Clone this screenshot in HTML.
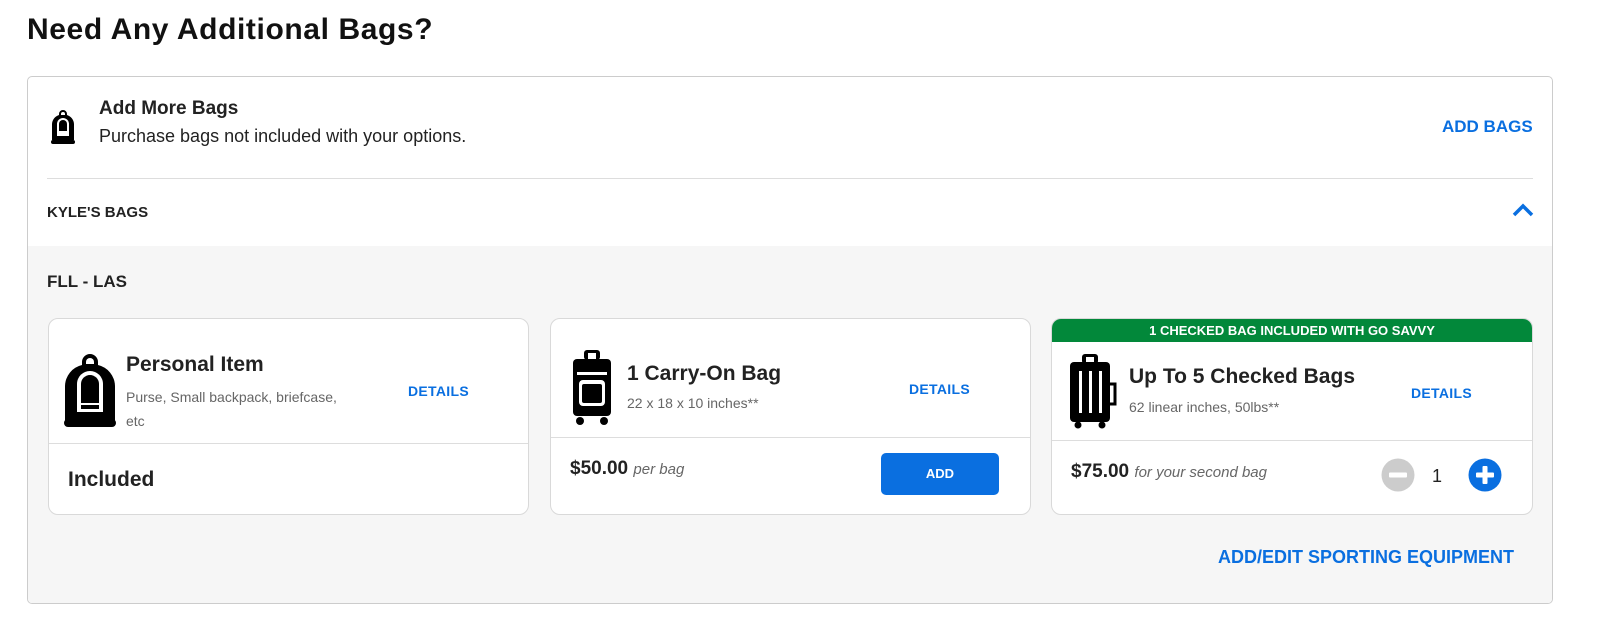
<!DOCTYPE html>
<html><head><meta charset="utf-8"><style>
*{margin:0;padding:0;box-sizing:border-box}
body{width:1602px;height:632px;background:#fff;font-family:"Liberation Sans",sans-serif;color:#222;position:relative;overflow:hidden}
.a{position:absolute}
.blue{color:#0a6fe0}
.card{position:absolute;top:318px;height:197px;background:#fff;border:1px solid #d9d9d9;border-radius:10px;overflow:hidden}
.card .div{position:absolute;left:0;right:0;border-top:1px solid #ddd}
.t{font-weight:bold;font-size:21px;color:#222}
.s{font-size:14px;color:#666}
.det{font-weight:bold;font-size:14px;color:#0a6fe0;letter-spacing:.3px}
</style></head><body>
<div class="a" style="left:27px;top:13px;font-size:30px;font-weight:bold;color:#111;letter-spacing:0.6px">Need Any Additional Bags?</div>
<div class="a" style="left:27px;top:76px;width:1526px;height:528px;border:1px solid #ccc;border-radius:5px;overflow:hidden">
  <div class="a" style="left:0;top:169px;width:100%;height:360px;background:#f6f6f6"></div>
  <div class="a" style="left:19px;top:101px;width:1486px;border-top:1px solid #ddd"></div>
  <svg class="a" style="left:23px;top:33px" width="24" height="35" viewBox="0 0 24 35"><path d="M8 4a4 4 0 0 1 8 0v1a10 10 0 0 1 7 9v16H1V14a10 10 0 0 1 7-9z" fill="#000"/><path d="M10 4a2 2 0 0 1 4 0v1h-4z" fill="#fff"/><path d="M6 14a6 6 0 0 1 12 0v12H6z" fill="#fff"/><path d="M8 14a4 4 0 0 1 8 0v7H8z" fill="#000"/><rect x="0" y="30" width="24" height="4" rx="2" fill="#000"/></svg>
  <div class="a" style="left:71px;top:21px;font-size:19px;font-weight:bold;color:#222">Add More Bags</div>
  <div class="a" style="left:71px;top:49px;font-size:18px;color:#222">Purchase bags not included with your options.</div>
  <div class="a blue" style="left:1414px;top:40px;font-size:17px;font-weight:bold">ADD BAGS</div>
  <div class="a" style="left:19px;top:127px;font-size:15px;font-weight:bold;color:#222">KYLE'S BAGS</div>
  <svg class="a" style="left:1484px;top:126px" width="22" height="14" viewBox="0 0 22 14"><path d="M2 12L11 3l9 9" stroke="#0a6fe0" stroke-width="3.5" fill="none"/></svg>
  <div class="a" style="left:19px;top:195px;font-size:17px;font-weight:bold;color:#222">FLL - LAS</div>
  <div class="a blue" style="left:1190px;top:470px;font-size:18px;font-weight:bold">ADD/EDIT SPORTING EQUIPMENT</div>
</div>

<div class="card" style="left:48px;width:481px">
  <svg class="a" style="left:15px;top:35px" width="52" height="75" viewBox="0 0 52 75"><path d="M18 8a8 8 0 0 1 16 0v3a22 22 0 0 1 17 21v37H1V32a22 22 0 0 1 17-21z" fill="#000"/><path d="M22 8a4 4 0 0 1 8 0v2h-8z" fill="#fff"/><path d="M13 30a13 13 0 0 1 26 0v28H13z" fill="#fff"/><path d="M17 30a9 9 0 0 1 18 0v19H17z" fill="#000"/><path d="M17 51h18v4H17z" fill="#000"/><rect x="0" y="65" width="52" height="8" rx="4" fill="#000"/></svg>
  <div class="a t" style="left:77px;top:34px">Personal Item</div>
  <div class="a s" style="left:77px;top:66px;line-height:24px;width:228px">Purse, Small backpack, briefcase, etc</div>
  <div class="a det" style="left:359px;top:64px">DETAILS</div>
  <div class="div" style="top:124px"></div>
  <div class="a t" style="left:19px;top:149px">Included</div>
</div>

<div class="card" style="left:550px;width:481px">
  <svg class="a" style="left:21px;top:31px" width="40" height="76" viewBox="0 0 40 76"><rect x="12" y="0" width="16" height="10" rx="3" fill="#000"/><rect x="16" y="3" width="8" height="7" fill="#fff"/><rect x="1" y="9" width="38" height="57" rx="4" fill="#000"/><rect x="5" y="22" width="30" height="3" fill="#fff"/><rect x="7" y="30" width="26" height="26" rx="4" fill="#fff"/><rect x="10" y="34" width="20" height="19" rx="2" fill="#000"/><circle cx="8" cy="71" r="4" fill="#000"/><circle cx="32" cy="71" r="4" fill="#000"/></svg>
  <div class="a t" style="left:76px;top:43px">1 Carry-On Bag</div>
  <div class="a s" style="left:76px;top:76px">22 x 18 x 10 inches**</div>
  <div class="a det" style="left:358px;top:62px">DETAILS</div>
  <div class="div" style="top:118px"></div>
  <div class="a" style="left:19px;top:139px;font-size:19px;font-weight:bold;color:#222">$50.00 <span style="font-size:15px;font-weight:normal;font-style:italic;color:#666">per bag</span></div>
  <div class="a" style="left:330px;top:134px;width:118px;height:42px;background:#0a6fe0;border-radius:5px;color:#fff;font-weight:bold;font-size:13px;text-align:center;line-height:42px">ADD</div>
</div>

<div class="card" style="left:1051px;width:482px">
  <div class="a" style="left:0;top:0;width:100%;height:23px;background:#02883a;color:#fff;font-weight:bold;font-size:13px;text-align:center;line-height:23px">1 CHECKED BAG INCLUDED WITH GO SAVVY</div>
  <svg class="a" style="left:17px;top:35px" width="48" height="76" viewBox="0 0 48 76"><rect x="13" y="0" width="16" height="10" rx="3" fill="#000"/><rect x="17" y="3" width="8" height="7" fill="#fff"/><rect x="1" y="8" width="40" height="60" rx="4" fill="#000"/><rect x="10" y="17" width="3" height="42" fill="#fff"/><rect x="20" y="17" width="3" height="42" fill="#fff"/><rect x="30" y="17" width="3" height="42" fill="#fff"/><path d="M41 30h5v20h-5" stroke="#000" stroke-width="3" fill="none"/><circle cx="9" cy="71" r="3.5" fill="#000"/><circle cx="33" cy="71" r="3.5" fill="#000"/></svg>
  <div class="a t" style="left:77px;top:46px">Up To 5 Checked Bags</div>
  <div class="a s" style="left:77px;top:80px">62 linear inches, 50lbs**</div>
  <div class="a det" style="left:359px;top:66px">DETAILS</div>
  <div class="div" style="top:121px"></div>
  <div class="a" style="left:19px;top:142px;font-size:19px;font-weight:bold;color:#222">$75.00 <span style="font-size:15px;font-weight:normal;font-style:italic;color:#666">for your second bag</span></div>
  <svg class="a" style="left:329px;top:139px" width="34" height="34" viewBox="0 0 34 34"><circle cx="17" cy="17" r="16.5" fill="#ccc"/><rect x="8" y="14.5" width="18" height="5" rx="1" fill="#fff"/></svg>
  <div class="a" style="left:380px;top:147px;font-size:18px;color:#222">1</div>
  <svg class="a" style="left:416px;top:139px" width="34" height="34" viewBox="0 0 34 34"><circle cx="17" cy="17" r="16.5" fill="#0a6fe0"/><rect x="8" y="14.5" width="18" height="5" rx="1" fill="#fff"/><rect x="14.5" y="8" width="5" height="18" rx="1" fill="#fff"/></svg>
</div>
</body></html>
